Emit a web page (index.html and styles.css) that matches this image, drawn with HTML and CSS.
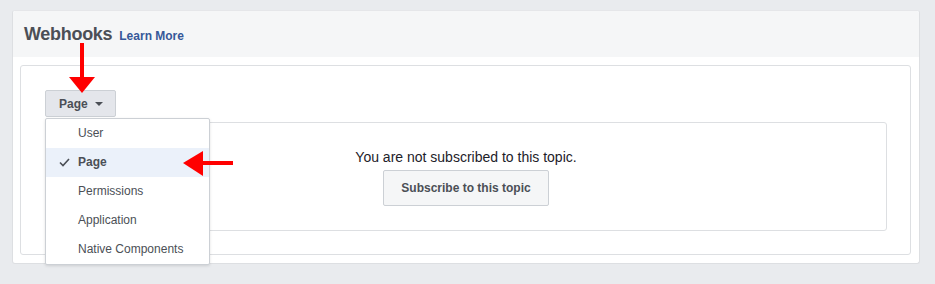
FILE: index.html
```html
<!DOCTYPE html>
<html lang="en">
<head>
    <meta charset="UTF-8">
    <title>Webhooks</title>
    <link rel="stylesheet" href="styles.css">
</head>
<body>
    <div class="card">
        <div class="card-header">
            <h2 class="title">Webhooks</h2>
            <a class="learn-more" href="#">Learn More</a>
        </div>
        <div class="card-body">
            <div class="box">
                <div class="menu-wrap">
                    <button class="topic-btn">Page <span class="caret"></span></button>
                    <ul class="dropdown">
                        <li class="item">User</li>
                        <li class="item selected">
                            <svg class="check" width="11" height="9" viewBox="0 0 11 9">
                                <polyline points="1,4.5 4,7.5 10,1" fill="none" stroke="#4b4f56" stroke-width="1.6"/>
                            </svg>
                            Page
                        </li>
                        <li class="item">Permissions</li>
                        <li class="item">Application</li>
                        <li class="item">Native Components</li>
                    </ul>
                </div>
                <div class="topic-panel">
                    <p class="topic-msg">You are not subscribed to this topic.</p>
                    <button class="subscribe-btn">Subscribe to this topic</button>
                </div>
            </div>
        </div>
    </div>

    <!-- annotation arrows -->
    <svg class="arrow arrow-down" width="27" height="52" viewBox="0 0 27 52">
        <rect x="11" y="0" width="4" height="35" fill="#ff0000"/>
        <polygon points="0,34 26,34 13,50" fill="#ff0000"/>
    </svg>
    <svg class="arrow arrow-left" width="52" height="27" viewBox="0 0 52 27">
        <rect x="19" y="10" width="31" height="4" fill="#ff0000"/>
        <polygon points="0,12 20,0 20,25" fill="#ff0000"/>
    </svg>
</body>
</html>
```

FILE: styles.css
```css
body {
    margin: 0;
    padding: 10px 15px 20px 12px;
    background-color: #e9ebee;
    font-family: "Liberation Sans", Helvetica, Arial, sans-serif;
    color: #4b4f56;
}

.card {
    width: 906px;
    background-color: #fff;
    border: 1px solid #dddfe2;
    border-top-color: #e5e6e9;
    border-radius: 3px;
}

.card-header {
    display: flex;
    align-items: baseline;
    gap: 7px;
    height: 46px;
    padding: 0 11px;
    background-color: #f5f6f7;
    border-radius: 3px 3px 0 0;
}

.title {
    margin: 0;
    padding-top: 13px;
    font-size: 18px;
    letter-spacing: -0.3px;
    font-weight: bold;
    color: #4b4f56;
}

.learn-more {
    font-size: 12px;
    font-weight: bold;
    color: #365899;
    text-decoration: none;
}

.card-body {
    padding: 8px 8px 8px 7px;
}

.box {
    display: flex;
    flex-direction: column;
    gap: 5px;
    padding: 24px 23px 23px 24px;
    border: 1px solid #dddfe2;
    border-radius: 3px;
}

.menu-wrap {
    position: relative;
    align-self: flex-start;
}

.topic-btn {
    display: flex;
    align-items: center;
    gap: 7px;
    height: 27px;
    padding: 0 12px 0 13px;
    font-family: inherit;
    font-size: 12px;
    font-weight: bold;
    color: #4b4f56;
    background-color: #e4e6eb;
    border: 1px solid #ccd0d5;
    border-radius: 2px;
}

.caret {
    width: 0;
    height: 0;
    border-left: 4px solid transparent;
    border-right: 4px solid transparent;
    border-top: 4px solid #4b4f56;
}

.dropdown {
    position: absolute;
    top: 28px;
    left: 0;
    z-index: 2;
    width: 163px;
    margin: 0;
    padding: 0;
    list-style: none;
    background-color: #fff;
    border: 1px solid #ccd0d5;
    border-radius: 2px;
    box-shadow: 0 1px 3px rgba(0, 0, 0, 0.12);
}

.item {
    position: relative;
    height: 29px;
    line-height: 29px;
    padding-left: 32px;
    font-size: 12px;
    color: #4b4f56;
}

.item.selected {
    font-weight: bold;
    background-color: #ebf1fa;
}

.check {
    position: absolute;
    left: 13px;
    top: 10px;
}

.topic-panel {
    display: flex;
    flex-direction: column;
    align-items: center;
    justify-content: center;
    gap: 4px;
    height: 107px;
    border: 1px solid #dddfe2;
    border-radius: 3px;
}

.topic-msg {
    margin: 0;
    font-size: 14px;
    line-height: 18px;
    color: #1d2129;
}

.subscribe-btn {
    height: 36px;
    padding: 0 17px;
    font-family: inherit;
    font-size: 12px;
    font-weight: bold;
    color: #4b4f56;
    background-color: #f5f6f7;
    border: 1px solid #ccd0d5;
    border-radius: 2px;
}

.arrow {
    position: absolute;
    z-index: 5;
}

.arrow-down {
    left: 69px;
    top: 43px;
}

.arrow-left {
    left: 183px;
    top: 151px;
}
```
